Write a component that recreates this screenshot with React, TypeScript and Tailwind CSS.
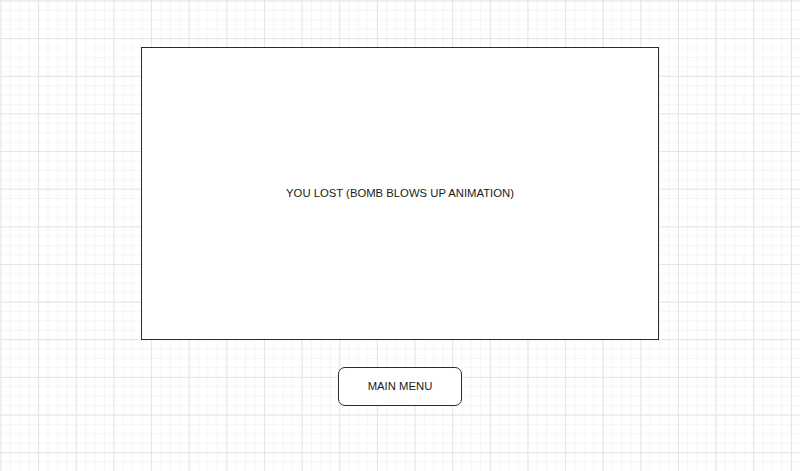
export default function App() {
    return (
        <div
            className="w-[800px] h-[471px] overflow-hidden bg-white flex flex-col items-center pt-[47px] font-['Liberation_Sans',Arial,sans-serif] text-[#1a1a1a]
            bg-[linear-gradient(to_right,#e5e5e5_1px,transparent_1px),linear-gradient(to_bottom,#e5e5e5_1px,transparent_1px),linear-gradient(to_right,#f5f5f5_1px,transparent_1px),linear-gradient(to_bottom,#f5f5f5_1px,transparent_1px)]
            bg-[size:37.65px_37.65px,37.65px_37.65px,9.41px_9.41px,9.41px_9.41px]
            bg-[position:0.5px_0.5px]"
        >
            {/* Game over screen */}
            <div className="w-[518px] h-[293px] bg-white border border-[#2b2b2b] flex items-center justify-center">
                <span className="text-[11.3px]">YOU LOST (BOMB BLOWS UP ANIMATION)</span>
            </div>

            <button className="mt-[27px] w-[124px] h-[39px] bg-white border border-[#2b2b2b] rounded-[7px] text-[11.3px] flex items-center justify-center">
                MAIN MENU
            </button>
        </div>
    );
}
